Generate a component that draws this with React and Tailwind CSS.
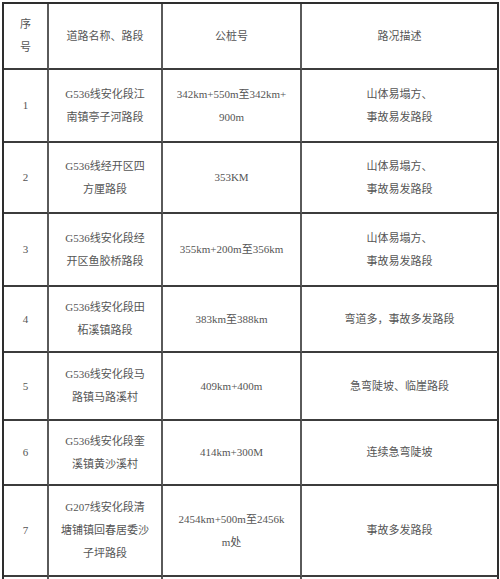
import React from "react";

const data = [
  ["1", ["G536线安化段江", "南镇亭子河路段"], ["342km+550m至342km+", "900m"], ["山体易塌方、", "事故易发路段"]],
  ["2", ["G536线经开区四", "方厘路段"], ["353KM"], ["山体易塌方、", "事故易发路段"]],
  ["3", ["G536线安化段经", "开区鱼胶桥路段"], ["355km+200m至356km"], ["山体易塌方、", "事故易发路段"]],
  ["4", ["G536线安化段田", "柘溪镇路段"], ["383km至388km"], ["弯道多，事故多发路段"]],
  ["5", ["G536线安化段马", "路镇马路溪村"], ["409km+400m"], ["急弯陡坡、临崖路段"]],
  ["6", ["G536线安化段奎", "溪镇黄沙溪村"], ["414km+300M"], ["连续急弯陡坡"]],
  ["7", ["G207线安化段清", "塘铺镇回春居委沙", "子坪路段"], ["2454km+500m至2456k", "m处"], ["事故多发路段"]],
];

function Lines({ lines }) {
  return (
    <div className="whitespace-nowrap">
      {lines.map((l, i) => (
        <div key={i}>{l}</div>
      ))}
    </div>
  );
}

function Cell({ children, last }) {
  return (
    <div
      className={
        "flex items-center justify-center text-center border-b-2 border-[#3c3c3c] " +
        (last ? "border-r-2 border-r-[#2e2e2e]" : "border-r-2 border-r-[#5a5a5a]")
      }
    >
      {children}
    </div>
  );
}

export default function App() {
  return (
    <div
      className="w-[500px] h-[579px] overflow-hidden bg-white text-[#555555] text-[11px] leading-[23px]"
      style={{ fontFamily: '"Liberation Serif", "Noto Sans CJK SC", serif' }}
    >
      <div className="ml-[2px] mt-[2px] w-[497px] border-l-2 border-t-2 border-[#2e2e2e] grid grid-cols-[45px_114px_139px_197px] grid-rows-[66px_73px_71px_73px_66px_68px_65px_91px_40px]">
        <Cell>
          <Lines lines={["序", "号"]} />
        </Cell>
        <Cell>
          <Lines lines={["道路名称、路段"]} />
        </Cell>
        <Cell>
          <Lines lines={["公桩号"]} />
        </Cell>
        <Cell last>
          <Lines lines={["路况描述"]} />
        </Cell>
        {data.map((r, i) => (
          <React.Fragment key={i}>
            <Cell>
              <Lines lines={[r[0]]} />
            </Cell>
            <Cell>
              <Lines lines={r[1]} />
            </Cell>
            <Cell>
              <Lines lines={r[2]} />
            </Cell>
            <Cell last>
              <Lines lines={r[3]} />
            </Cell>
          </React.Fragment>
        ))}
        <Cell />
        <Cell />
        <Cell />
        <Cell last />
      </div>
    </div>
  );
}
